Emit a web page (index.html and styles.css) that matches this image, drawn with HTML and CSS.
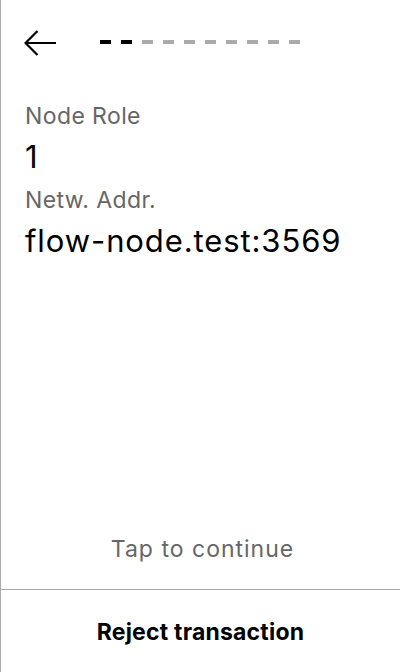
FILE: index.html
```html
<!DOCTYPE html>
<html>
<head>
<meta charset="utf-8">
<link rel="stylesheet" href="styles.css">
</head>
<body>
<div class="screen">
  <header class="top">
    <svg class="back" width="34" height="28" viewBox="0 0 34 28">
      <path d="M1.5 14 H32 M13.5 2 L1.5 14 L13.5 26" fill="none" stroke="#000" stroke-width="2.2"/>
    </svg>
    <div class="steps">
      <span class="dash on"></span><span class="dash on"></span><span class="dash"></span><span class="dash"></span><span class="dash"></span><span class="dash"></span><span class="dash"></span><span class="dash"></span><span class="dash"></span><span class="dash"></span>
    </div>
  </header>
  <main class="content">
    <div class="label">Node Role</div>
    <div class="value">1</div>
    <div class="label">Netw. Addr.</div>
    <div class="value">flow-node.test:3569</div>
  </main>
  <div class="hint">Tap to continue</div>
  <footer class="reject">Reject transaction</footer>
</div>
</body>
</html>
```
FILE: styles.css
```css
html, body {
  margin: 0;
  padding: 0;
  background: #fff;
}
.screen {
  width: 400px;
  height: 672px;
  box-sizing: border-box;
  border-left: 1px solid #aaa;
  display: flex;
  flex-direction: column;
  font-family: Inter, "Liberation Sans", sans-serif;
  color: #000;
}
.top {
  display: flex;
  align-items: center;
  padding: 29px 0 0 23px;
  height: 28px;
}
.back {
  display: block;
}
.steps {
  display: flex;
  gap: 10px;
  margin-left: 42px;
  margin-top: -2px;
}
.dash {
  width: 11px;
  height: 4px;
  background: #aaa;
}
.dash.on {
  background: #000;
}
.content {
  padding: 0 0 0 24px;
  margin-top: 41px;
  flex: 1;
}
.label {
  font-size: 23px;
  letter-spacing: 0.4px;
  color: #666;
  line-height: 36px;
}
.value {
  font-size: 31px;
  letter-spacing: 0.9px;
  line-height: 46px;
  margin-bottom: 2px;
}
.hint {
  text-align: center;
  font-size: 23px;
  letter-spacing: 1px;
  line-height: 28px;
  color: #666;
  padding: 0 0 26px 4px;
}
.reject {
  border-top: 1px solid #aaa;
  height: 83px;
  padding-top: 2px;
  box-sizing: border-box;
  display: flex;
  align-items: center;
  justify-content: center;
  font-size: 23px;
  letter-spacing: 0.2px;
  font-weight: 700;
}
```
